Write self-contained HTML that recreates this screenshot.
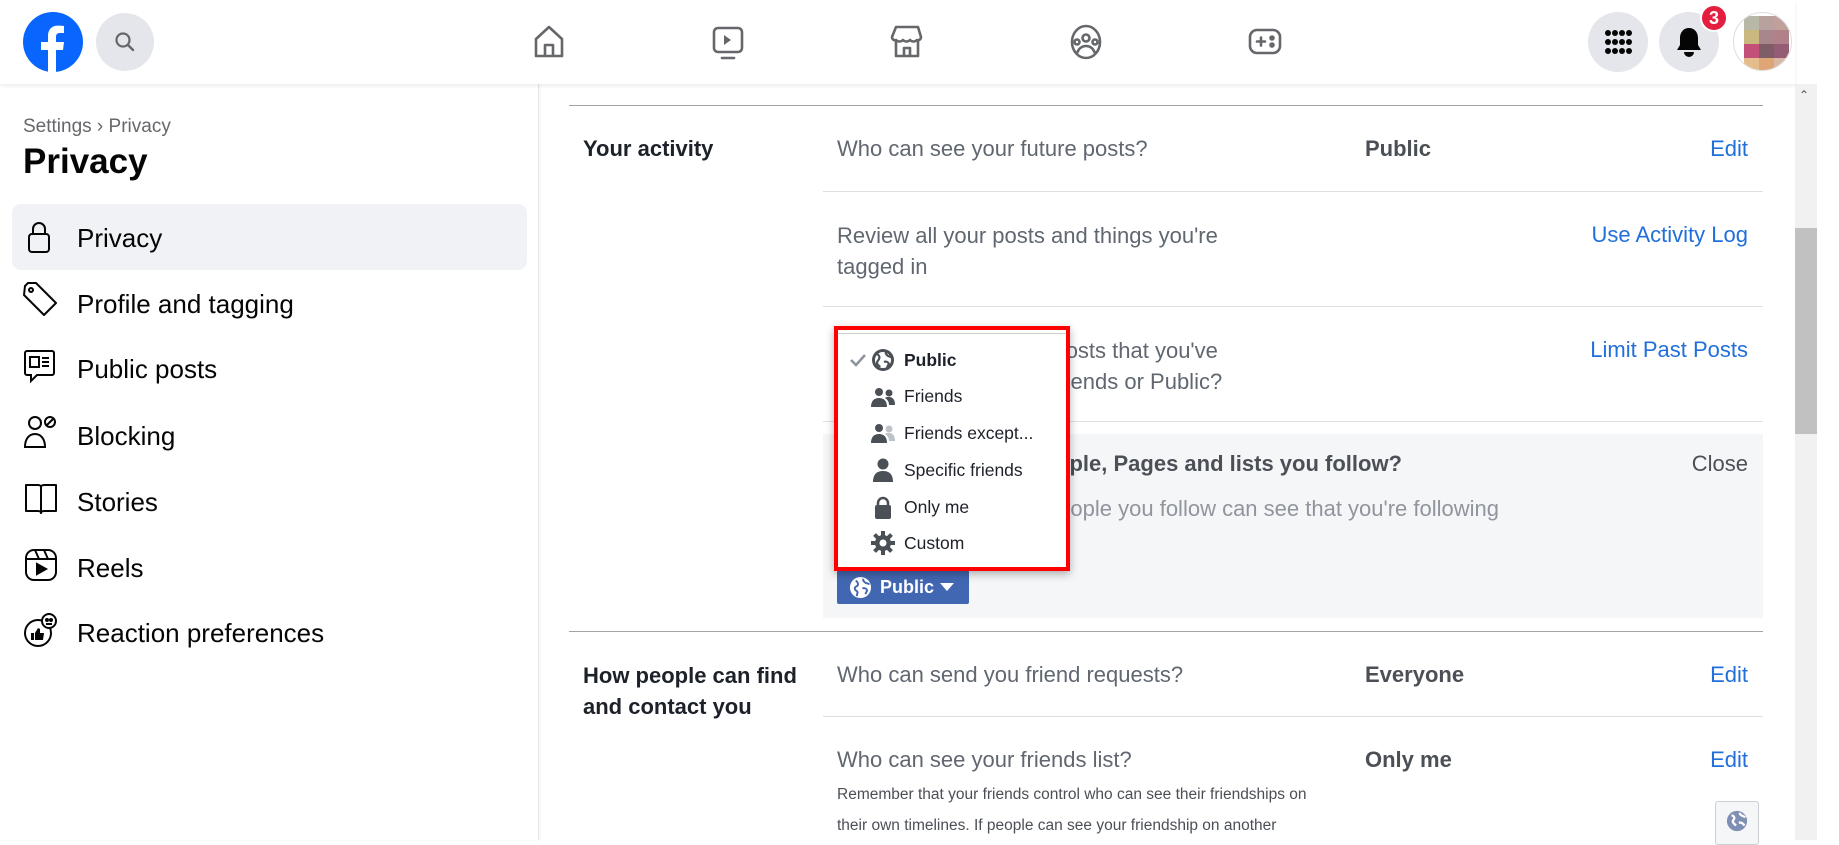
<!DOCTYPE html>
<html><head><meta charset="utf-8">
<style>
*{margin:0;padding:0;box-sizing:border-box}
body{width:1839px;height:840px;overflow:hidden;background:#fff;font-family:"Liberation Sans",Arial,sans-serif;position:relative}
.a{position:absolute}
.hdr{left:0;top:0;width:1795px;height:84px;background:#fff;box-shadow:0 2px 4px rgba(0,0,0,.08);z-index:5}
.circ{border-radius:50%;background:#e4e6eb}
.side{left:0;top:84px;width:539px;height:756px;border-right:1px solid #e4e6eb;box-shadow:1px 0 3px rgba(0,0,0,.05)}
.si{left:77px;font-size:26px;color:#050505;line-height:30px}
.ic{left:23px;width:36px;height:36px}
.t{font-size:22px;line-height:26px;color:#606770}
.v{font-size:22px;font-weight:bold;color:#4b4f56;left:1365px}
.lk{font-size:22px;color:#216fdb;right:91px;text-align:right}
.hr{height:1px;background:#dddfe2;left:823px;width:940px}
.dd{font-size:17.5px;color:#1d2129;left:904px;line-height:20px}
.di{left:871px;width:24px;height:24px}
</style></head><body>

<!-- header -->
<div class="a hdr">
  <svg class="a" style="left:23px;top:12px" width="60" height="60" viewBox="0 0 60 60"><circle cx="30" cy="30" r="30" fill="#0866ff"/><path d="M33 60V38h7l1-8h-8v-5c0-2.5 1-4 4-4h4v-7c-1-.2-3.5-.4-6-.4-6 0-10 3.6-10 10.3V30h-7v8h7v22z" fill="#fff"/></svg>
  <div class="a circ" style="left:96px;top:13px;width:58px;height:58px"></div>
  <svg class="a" style="left:113px;top:30px" width="24" height="24" viewBox="0 0 24 24"><circle cx="10" cy="10" r="6.5" fill="none" stroke="#65676b" stroke-width="2.2"/><path d="M15 15l5 5" stroke="#65676b" stroke-width="2.4" stroke-linecap="round"/></svg>
  <svg class="a" style="left:532px;top:25px" width="34" height="34" viewBox="0 0 34 34" fill="none" stroke="#65676b" stroke-width="2.6" stroke-linejoin="round"><path d="M4 14L17 2l13 12v17H4z"/><path d="M13 31V20h8v11"/></svg>
  <svg class="a" style="left:711px;top:25px" width="34" height="36" viewBox="0 0 34 36" fill="none" stroke="#65676b" stroke-width="2.6"><rect x="3" y="3" width="28" height="24" rx="4"/><path d="M13 10l7 5-7 5z" fill="#65676b" stroke="none"/><path d="M11 33h12" stroke-linecap="round"/></svg>
  <svg class="a" style="left:890px;top:24px" width="34" height="36" viewBox="0 0 34 36" fill="none" stroke="#65676b" stroke-width="2.6" stroke-linejoin="round"><path d="M6 3h22l3 10c0 2-2 4-4 3-2 2-5 2-7 0-2 2-5 2-7 0-2 2-5 2-7 0-2 1-4-1-4-3z"/><path d="M6 16v16h22V16"/><path d="M14 32v-8h6v8"/></svg>
  <svg class="a" style="left:1069px;top:24px" width="34" height="36" viewBox="0 0 34 36" fill="none" stroke="#65676b" stroke-width="2.6"><ellipse cx="17" cy="18" rx="14" ry="16"/><circle cx="17" cy="14" r="3.5"/><circle cx="8" cy="18" r="2.5"/><circle cx="26" cy="18" r="2.5"/><path d="M8 29c2-5 5-7 9-7s7 2 9 7"/></svg>
  <svg class="a" style="left:1247px;top:26px" width="36" height="32" viewBox="0 0 36 32" fill="none" stroke="#65676b" stroke-width="2.6"><rect x="3" y="4" width="30" height="23" rx="7"/><path d="M10 15.5h8M14 11.5v8" stroke-linecap="round"/><circle cx="25" cy="12" r="1.5" fill="#65676b"/><circle cx="25" cy="19" r="1.5" fill="#65676b"/></svg>
  <div class="a circ" style="left:1588px;top:12px;width:60px;height:60px"></div>
  <svg class="a" style="left:1603px;top:27px" width="30" height="30" viewBox="0 0 30 30" fill="#050505"><circle cx="5" cy="6" r="3"/><circle cx="12" cy="6" r="3"/><circle cx="19" cy="6" r="3"/><circle cx="26" cy="6" r="3"/><circle cx="5" cy="15" r="3"/><circle cx="12" cy="15" r="3"/><circle cx="19" cy="15" r="3"/><circle cx="26" cy="15" r="3"/><circle cx="5" cy="24" r="3"/><circle cx="12" cy="24" r="3"/><circle cx="19" cy="24" r="3"/><circle cx="26" cy="24" r="3"/></svg>
  <div class="a circ" style="left:1659px;top:12px;width:60px;height:60px"></div>
  <svg class="a" style="left:1675px;top:26px" width="28" height="32" viewBox="0 0 28 32" fill="#050505"><path d="M14 2c-6 0-9 5-9 10v7l-3 5h24l-3-5v-7c0-5-3-10-9-10z"/><path d="M9 26a5 5 0 0010 0z"/></svg>
  <div class="a" style="left:1700px;top:4px;width:28px;height:28px;border-radius:14px;background:#e41e3f;color:#fff;font-size:18px;font-weight:bold;text-align:center;line-height:24px;border:2px solid #fff">3</div>
  <div class="a" style="left:1733px;top:12px;width:59px;height:59px;border-radius:50%;border:1px solid #ddd;overflow:hidden">
    <div style="display:grid;grid-template-columns:repeat(3,15px);margin:3px 0 0 10px">
      <div style="height:14px;background:#b7b8a6"></div><div style="height:14px;background:#b9a1a0"></div><div style="height:14px;background:#c19f9a"></div>
      <div style="height:14px;background:#c9b97f"></div><div style="height:14px;background:#a8868c"></div><div style="height:14px;background:#b08189"></div>
      <div style="height:14px;background:#c35078"></div><div style="height:14px;background:#7e5d67"></div><div style="height:14px;background:#955d75"></div>
      <div style="height:14px;background:#e5bd8c"></div><div style="height:14px;background:#dea676"></div><div style="height:14px;background:#d8b8a4"></div>
    </div>
  </div>
</div>

<!-- scrollbar -->
<div class="a" style="left:1795px;top:0;width:44px;height:840px;background:#fff"></div>
<div class="a" style="left:1795px;top:84px;width:22px;height:756px;background:#f1f1f1"></div>
<div class="a" style="left:1795px;top:228px;width:22px;height:206px;background:#c1c1c1"></div>
<div class="a" style="left:1799px;top:88px;font-size:12px;color:#505050">&#8963;</div>

<!-- sidebar -->
<div class="a side">
  <div class="a" style="left:23px;top:32px;font-size:19px;color:#65676b">Settings › Privacy</div>
  <div class="a" style="left:23px;top:58px;font-size:35px;font-weight:bold;color:#050505">Privacy</div>
  <div class="a" style="left:12px;top:120px;width:515px;height:66px;border-radius:9px;background:#f0f2f5"></div>
</div>
<div class="a si" style="top:223px">Privacy</div>
<div class="a si" style="top:289px">Profile and tagging</div>
<div class="a si" style="top:354px">Public posts</div>
<div class="a si" style="top:421px">Blocking</div>
<div class="a si" style="top:487px">Stories</div>
<div class="a si" style="top:553px">Reels</div>
<div class="a si" style="top:618px">Reaction preferences</div>
<svg class="a ic" style="top:219px" viewBox="0 0 36 36" fill="none" stroke="#050505" stroke-width="2"><rect x="6" y="15" width="20" height="18" rx="3"/><path d="M10 15V10a6 6 0 0112 0v5"/></svg>
<svg class="a ic" style="top:282px" viewBox="0 0 36 36" fill="none" stroke="#050505" stroke-width="2" stroke-linejoin="round"><path d="M2 4l3-3h8l20 20-12 12L1 13z"/><circle cx="8" cy="8" r="2"/></svg>
<svg class="a ic" style="top:348px" viewBox="0 0 36 36" fill="none" stroke="#050505" stroke-width="2"><path d="M4 3h25a2 2 0 012 2v20a2 2 0 01-2 2H14l-6 6v-6H4a2 2 0 01-2-2V5a2 2 0 012-2z"/><rect x="7" y="9" width="9" height="10"/><path d="M19 10h7M19 14h7M19 18h7"/></svg>
<svg class="a ic" style="top:414px" viewBox="0 0 36 36" fill="none" stroke="#050505" stroke-width="2"><circle cx="12" cy="9" r="6"/><path d="M2 33c0-8 4-13 10-13s10 5 10 13z"/><circle cx="27" cy="8" r="5"/><path d="M24 11l6-6"/></svg>
<svg class="a ic" style="top:482px" viewBox="0 0 36 36" fill="none" stroke="#050505" stroke-width="2" stroke-linejoin="round"><path d="M3 3h12c2 0 3 1 3 2v26c0-1-1-2-3-2H3z"/><path d="M33 3H21c-2 0-3 1-3 2v26c0-1 1-2 3-2h12z"/></svg>
<svg class="a ic" style="top:547px" viewBox="0 0 36 36" fill="none" stroke="#050505" stroke-width="2"><rect x="3" y="3" width="30" height="30" rx="8"/><path d="M3 12h30M12 3l4 9M21 3l4 9"/><path d="M14 17l9 5-9 5z" fill="#050505"/></svg>
<svg class="a ic" style="top:612px" viewBox="0 0 36 36" fill="none" stroke="#050505" stroke-width="2"><circle cx="15" cy="21" r="13"/><circle cx="26" cy="9" r="7" fill="#fff"/><circle cx="24" cy="8" r="1" fill="#050505"/><circle cx="28" cy="8" r="1" fill="#050505"/><path d="M23 12h6"/><path d="M8 21h3v7H8zM12 21l3-5 2 1v4h4l-1 7h-8z" fill="#050505" stroke="none"/></svg>

<!-- content -->
<div class="a" style="left:569px;top:105px;width:1194px;height:1px;background:#a0a3a8"></div>
<div class="a" style="left:583px;top:136px;font-size:22px;font-weight:bold;color:#1d2129">Your activity</div>
<div class="a t" style="left:837px;top:136px">Who can see your future posts?</div>
<div class="a v" style="top:136px">Public</div>
<div class="a lk" style="top:136px">Edit</div>
<div class="a hr" style="top:191px"></div>
<div class="a t" style="left:837px;top:220px;width:440px;line-height:31px">Review all your posts and things you're tagged in</div>
<div class="a lk" style="top:222px">Use Activity Log</div>
<div class="a hr" style="top:306px"></div>
<div class="a t" style="left:837px;top:335px;width:440px;line-height:31px">Limit the audience for posts that you've shared with friends of friends or Public?</div>
<div class="a lk" style="top:337px">Limit Past Posts</div>
<div class="a hr" style="top:421px"></div>
<div class="a" style="left:823px;top:434px;width:940px;height:184px;background:#f5f6f7"></div>
<div class="a" style="right:437px;top:451px;font-size:22px;font-weight:bold;color:#4b4f56;white-space:nowrap">Who can see the people, Pages and lists you follow?</div>
<div class="a" style="right:91px;top:451px;font-size:22px;color:#4b4f56;text-align:right">Close</div>
<div class="a" style="right:340px;top:496px;font-size:22px;color:#90949c;white-space:nowrap">Remember: the people you follow can see that you're following</div>
<div class="a" style="left:837px;top:570px;width:132px;height:34px;background:#4267b2;border-radius:2px;color:#fff;font-weight:bold;font-size:18px;line-height:34px;padding-left:43px">Public</div>
<svg class="a" style="left:849px;top:576px" width="23" height="23" viewBox="0 0 24 24"><circle cx="12" cy="12" r="11" fill="#fff"/><path d="M7 5c2 1 3 3 2 5-1 1-3 1-3 3s2 2 3 4l-1 4M15 3c-1 2 1 3 2 4s3 0 4 2M14 13c2-1 4 0 5 2l-2 4" stroke="#4267b2" stroke-width="2" fill="none"/></svg>
<svg class="a" style="left:940px;top:583px" width="14" height="8" viewBox="0 0 14 8"><path d="M0 0h14L7 8z" fill="#fff"/></svg>
<div class="a" style="left:569px;top:631px;width:1194px;height:1px;background:#a0a3a8"></div>
<div class="a" style="left:583px;top:660px;font-size:22px;font-weight:bold;color:#1d2129;line-height:31px">How people can find<br>and contact you</div>
<div class="a t" style="left:837px;top:662px">Who can send you friend requests?</div>
<div class="a v" style="top:662px">Everyone</div>
<div class="a lk" style="top:662px">Edit</div>
<div class="a hr" style="top:716px"></div>
<div class="a t" style="left:837px;top:747px">Who can see your friends list?</div>
<div class="a v" style="top:747px">Only me</div>
<div class="a lk" style="top:747px">Edit</div>
<div class="a" style="left:837px;top:779px;font-size:15.5px;color:#4b4f56;line-height:31px;width:500px">Remember that your friends control who can see their friendships on<br>their own timelines. If people can see your friendship on another</div>
<div class="a" style="left:1715px;top:801px;width:44px;height:44px;border:1px solid #ccd0d5;border-radius:3px;background:#f5f6f7"></div>
<svg class="a" style="left:1726px;top:810px" width="22" height="22" viewBox="0 0 24 24"><circle cx="12" cy="12" r="11" fill="#7f8fb3"/><path d="M6 6c3 0 4 3 2 5s1 4 3 6M15 3c0 3 3 3 6 5M14 14c3-1 5 1 6 3" stroke="#fff" stroke-width="2.5" fill="none"/></svg>

<!-- dropdown -->
<div class="a" style="left:834px;top:326px;width:236px;height:245px;border:4px solid #f00;background:#fff;box-shadow:0 3px 8px rgba(0,0,0,.3)">
  <div style="margin:3px 0 0 0;height:1px;background:#ccc"></div>
</div>
<svg class="a" style="left:849px;top:353px" width="18" height="14" viewBox="0 0 18 14"><path d="M2 7l5 5 9-10" stroke="#8d949e" stroke-width="2.5" fill="none"/></svg>
<svg class="a di" style="top:348px" viewBox="0 0 24 24"><circle cx="12" cy="12" r="11" fill="#4b4f56"/><circle cx="12" cy="12" r="8" fill="#fff"/><path d="M6 6c2 1 3 3 2 5s-2 2-2 4 2 2 3 4M15 4c-1 2 1 3 2 4s3 0 4 2M13 14c2-1 4 0 5 2l-2 3" stroke="#4b4f56" stroke-width="2.2" fill="none"/></svg>
<div class="a dd" style="top:350px;font-weight:bold">Public</div>
<svg class="a di" style="top:385px" viewBox="0 0 24 24" fill="#4b4f56"><circle cx="8" cy="7" r="4"/><path d="M0 22c0-6 3-9 8-9s8 3 8 9z"/><circle cx="18" cy="8" r="3.5"/><path d="M14 13c1-1 2-1 4-1 4 0 6 3 6 8h-6c0-3-1-5-4-7z"/></svg>
<div class="a dd" style="top:386px">Friends</div>
<svg class="a di" style="top:421px" viewBox="0 0 24 24"><circle cx="8" cy="7" r="4" fill="#4b4f56"/><path d="M0 22c0-6 3-9 8-9s8 3 8 9z" fill="#4b4f56"/><circle cx="18" cy="8" r="3.5" fill="#bec3c9"/><path d="M14 13c1-1 2-1 4-1 4 0 6 3 6 8h-6c0-3-1-5-4-7z" fill="#bec3c9"/></svg>
<div class="a dd" style="top:423px">Friends except...</div>
<svg class="a di" style="top:458px" viewBox="0 0 24 24" fill="#4b4f56"><circle cx="12" cy="6" r="5.5"/><path d="M2 24c0-8 4-11 10-11s10 3 10 11z"/></svg>
<div class="a dd" style="top:460px">Specific friends</div>
<svg class="a di" style="top:495px" viewBox="0 0 24 24"><path d="M7 11V8a5 5 0 0110 0v3" stroke="#4b4f56" stroke-width="2.5" fill="none"/><rect x="4" y="10" width="16" height="14" rx="2" fill="#4b4f56"/></svg>
<div class="a dd" style="top:497px">Only me</div>
<svg class="a di" style="top:531px" viewBox="0 0 24 24"><g fill="#4b4f56"><circle cx="12" cy="12" r="8"/><rect x="10" y="0" width="4" height="24"/><rect x="0" y="10" width="24" height="4"/><rect x="10" y="0" width="4" height="24" transform="rotate(45 12 12)"/><rect x="10" y="0" width="4" height="24" transform="rotate(-45 12 12)"/></g><circle cx="12" cy="12" r="3.5" fill="#fff"/></svg>
<div class="a dd" style="top:533px">Custom</div>

</body></html>
